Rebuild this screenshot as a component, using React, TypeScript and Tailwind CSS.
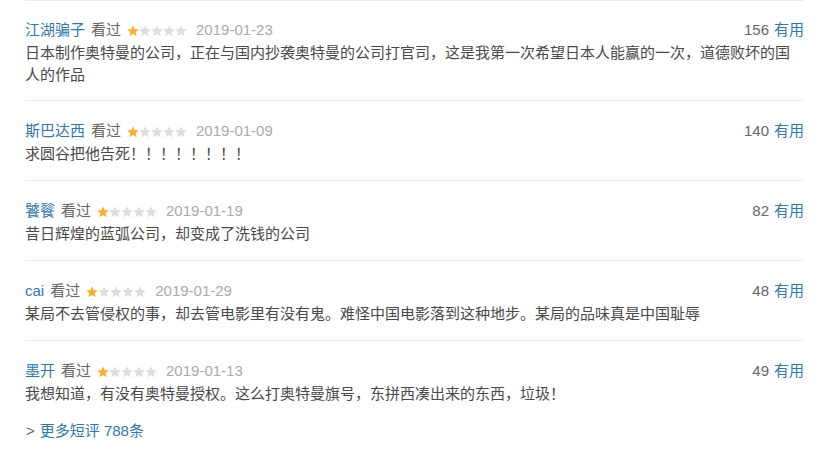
type Comment = {
  user: string;
  date: string;
  votes: number;
  content: string;
};

const comments: Comment[] = [
  {
    user: "江湖骗子",
    date: "2019-01-23",
    votes: 156,
    content:
      "日本制作奥特曼的公司，正在与国内抄袭奥特曼的公司打官司，这是我第一次希望日本人能赢的一次，道德败坏的国人的作品",
  },
  {
    user: "斯巴达西",
    date: "2019-01-09",
    votes: 140,
    content: "求圆谷把他告死！！！！！！！！",
  },
  {
    user: "饕餮",
    date: "2019-01-19",
    votes: 82,
    content: "昔日辉煌的蓝弧公司，却变成了洗钱的公司",
  },
  {
    user: "cai",
    date: "2019-01-29",
    votes: 48,
    content:
      "某局不去管侵权的事，却去管电影里有没有鬼。难怪中国电影落到这种地步。某局的品味真是中国耻辱",
  },
  {
    user: "墨开",
    date: "2019-01-13",
    votes: 49,
    content:
      "我想知道，有没有奥特曼授权。这么打奥特曼旗号，东拼西凑出来的东西，垃圾！",
  },
];

const Star = ({ on }: { on: boolean }) => (
  <svg width="12" height="12" viewBox="1 1 22 22" className="block">
    <path
      d="M12 1.5l3.1 6.9 7.4.7-5.6 5 1.7 7.4L12 17.7l-6.6 3.8 1.7-7.4-5.6-5 7.4-.7z"
      fill={on ? "#f6b333" : "#dedede"}
    />
  </svg>
);

const CommentItem = ({ c }: { c: Comment }) => (
  <div className="border-t border-[#ececec] pt-[19px] pb-[15px] first:pt-[18px] first:pb-[14px]">
    <div className="flex h-[23px] items-center justify-between">
      <div className="flex items-center">
        <span className="text-[#3377aa]">{c.user}</span>
        <span className="ml-[6px] text-[#666]">看过</span>
        <span className="ml-[6px] flex">
          {[0, 1, 2, 3, 4].map((i) => (
            <Star key={i} on={i === 0} />
          ))}
        </span>
        <span className="ml-[9px] text-[#aaa]">{c.date}</span>
      </div>
      <div className="flex items-center">
        <span className="text-[#666]">{c.votes}</span>
        <span className="ml-[5px] text-[#3377aa]">有用</span>
      </div>
    </div>
    <p className="leading-[22px] text-[#494949]">{c.content}</p>
  </div>
);

export default function App() {
  return (
    <div
      className="min-h-screen bg-white text-[15px]"
      style={{ fontFamily: '"Liberation Sans", "Noto Sans CJK SC", sans-serif' }}
    >
      <div className="ml-[25px] w-[779px]">
        {comments.map((c) => (
          <CommentItem key={c.user} c={c} />
        ))}
        <div className="flex items-center pl-[1px] leading-[22px]">
          <span className="text-[#666]">&gt;</span>
          <span className="ml-[5px] text-[#3377aa]">更多短评 788条</span>
        </div>
      </div>
    </div>
  );
}
